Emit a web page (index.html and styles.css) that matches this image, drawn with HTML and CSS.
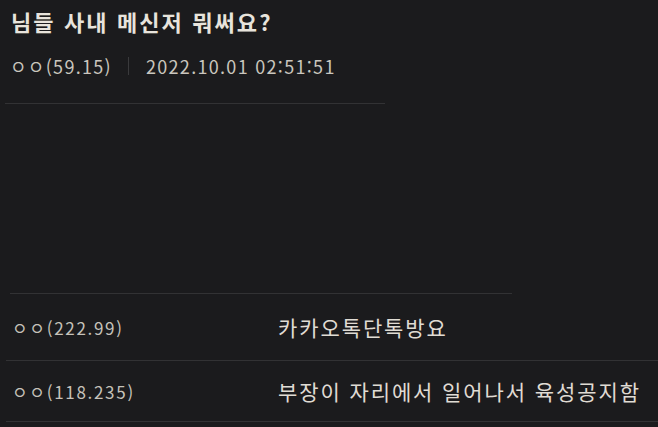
FILE: index.html
```html
<!DOCTYPE html>
<html lang="ko">
<head>
<meta charset="utf-8">
<title>님들 사내 메신저 뭐써요?</title>
<link rel="stylesheet" href="styles.css">
</head>
<body>
<div class="post">
  <h1 class="title">님들 사내 메신저 뭐써요?</h1>
  <div class="meta">
    <span class="author">ㅇㅇ(59.15)</span>
    <span class="divider"></span>
    <span class="date">2022.10.01 02:51:51</span>
  </div>
  <div class="rule rule-head"></div>
  <div class="rule rule-body"></div>
  <div class="comments">
    <div class="comment comment-first">
      <span class="c-author">ㅇㅇ(222.99)</span>
      <span class="c-text">카카오톡단톡방요</span>
    </div>
    <div class="comment">
      <span class="c-author">ㅇㅇ(118.235)</span>
      <span class="c-text">부장이 자리에서 일어나서 육성공지함</span>
    </div>
  </div>
</div>
</body>
</html>
```

FILE: styles.css
```css
html, body {
  margin: 0;
  background: #1b1b1d;
}
body {
  font-family: "Noto Sans CJK KR", "Noto Sans", sans-serif;
  color: #dcd8d0;
  overflow: hidden;
}
.title {
  margin: 0;
  padding: 6px 0 0 11px;
  font-size: 22px;
  font-weight: 700;
  letter-spacing: 2.1px;
  line-height: 30px;
  color: #e8e4dc;
}
.meta {
  display: flex;
  align-items: center;
  margin-top: 21px;
  padding-left: 10px;
  height: 18px;
  font-size: 18px;
  line-height: 18px;
  letter-spacing: 1.3px;
  color: #cac6be;
}
.divider {
  width: 1px;
  height: 18px;
  background: #3a3a3c;
  margin: 0 17px 0 16px;
}
.rule {
  height: 1px;
  background: #323234;
}
.rule-head {
  margin: 28px 0 0 5px;
  width: 380px;
}
.rule-body {
  margin: 189px 0 0 10px;
  width: 502px;
}
.comments {
  margin-left: 6px;
}
.comment {
  display: flex;
  align-items: center;
  height: 60px;
  border-bottom: 1px solid #323234;
}
.comment-first {
  height: 66px;
}
.c-author {
  width: 266px;
  padding-left: 6px;
  flex-shrink: 0;
  font-size: 17px;
  letter-spacing: 1.7px;
  color: #c6c2ba;
}
.c-text {
  font-size: 21px;
  letter-spacing: 1.9px;
  color: #e0dcd4;
}
```
